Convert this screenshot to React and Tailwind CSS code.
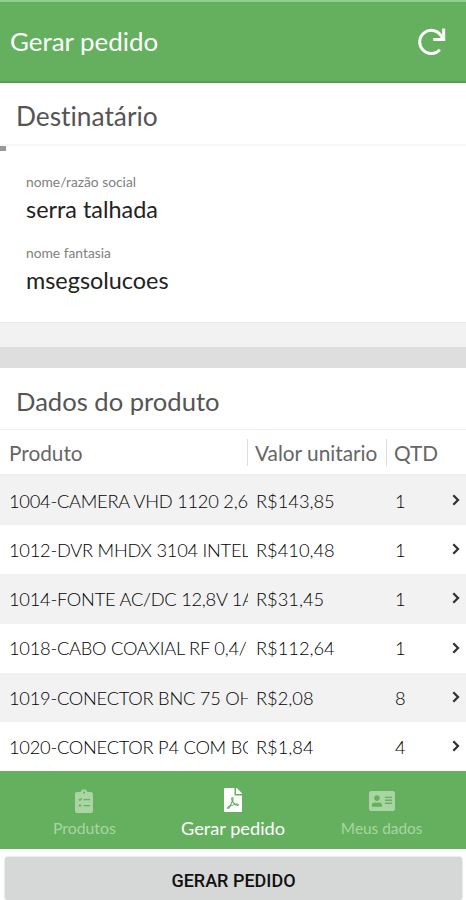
import { FaAddressCard, FaFilePdf } from "react-icons/fa";

const PRODUCTS = [
  { name: "1004-CAMERA VHD 1120 2,6", price: "R$143,85", qty: 1 },
  { name: "1012-DVR MHDX 3104 INTEL", price: "R$410,48", qty: 1 },
  { name: "1014-FONTE AC/DC 12,8V 1A", price: "R$31,45", qty: 1 },
  { name: "1018-CABO COAXIAL RF 0,4/", price: "R$112,64", qty: 1 },
  { name: "1019-CONECTOR BNC 75 OH", price: "R$2,08", qty: 8 },
  { name: "1020-CONECTOR P4 COM BO", price: "R$1,84", qty: 4 },
];

function RefreshIcon() {
  return (
    <svg width="28" height="28" viewBox="0 0 28 28" fill="none" stroke="white" strokeWidth="3">
      <path d="M21.8 21.8A11.6 11.6 0 1 1 22.9 7.4L25.2 10.8" />
      <path d="M25.7 0.5v11H15.2" />
    </svg>
  );
}

function ClipboardIcon() {
  return (
    <svg width="18" height="24" viewBox="0 0 18 24">
      <path
        fill="currentColor"
        d="M2 3h3.6a3.5 3.5 0 0 1 6.8 0H16a2 2 0 0 1 2 2v17a2 2 0 0 1-2 2H2a2 2 0 0 1-2-2V5a2 2 0 0 1 2-2z"
      />
      <circle cx="9" cy="3.4" r="1" fill="#65b05f" />
      <path
        d="M3.8 10.3l1.1 1 2-2.2M8.6 10.6H15M8.6 16.6H15"
        stroke="#65b05f"
        strokeWidth="1.3"
        fill="none"
      />
      <circle cx="5" cy="16.6" r="1.2" fill="#65b05f" />
    </svg>
  );
}

function Chevron() {
  return (
    <svg className="-mt-[3px]" width="8" height="12" viewBox="0 0 8 12" fill="none" stroke="#333" strokeWidth="2.3">
      <path d="M1.3 1.2L6 6l-4.7 4.8" />
    </svg>
  );
}

function Field({ label, value }) {
  return (
    <div className="h-[71px]">
      <p className="text-[13.8px] leading-[18px] text-[#808080]">{label}</p>
      <p className="mt-[5px] text-[23.4px] leading-[26px] text-[#222]">{value}</p>
    </div>
  );
}

function ProductRow({ name, price, qty }) {
  return (
    <div className="flex flex-1 items-center pl-[9px] pr-[6px] pt-[2px] text-[18.3px] font-light text-black odd:bg-[#f2f2f2]">
      <span className="w-[239px] overflow-hidden whitespace-nowrap tracking-[-0.25px]">{name}</span>
      <span className="ml-2 w-[139px]">{price}</span>
      <span className="flex-1">{qty}</span>
      <Chevron />
    </div>
  );
}

export default function App() {
  return (
    <div className="flex h-[900px] w-full flex-col overflow-hidden bg-white font-['Lato',sans-serif] [font-variant-ligatures:none]">
      <header className="flex h-[83px] shrink-0 items-center justify-between border-t-2 border-b-2 border-t-[#8fd18a] border-b-[#559f4f] bg-[#65b05f] pl-[10px] pr-[20px] text-white">
        <h1 className="text-[25.9px]">Gerar pedido</h1>
        <RefreshIcon />
      </header>

      <section className="h-[239px] shrink-0">
        <h2 className="h-[63px] border-b-2 border-[#f8f8f8] pl-4 text-[26.3px] leading-[66px] text-[#555]">
          Destinatário
        </h2>
        <div className="h-[5px] w-[6px] bg-[#999]" />
        <div className="pl-[26px] pt-[22px]">
          <Field label="nome/razão social" value="serra talhada" />
          <Field label="nome fantasia" value="msegsolucoes" />
        </div>
      </section>

      <div className="h-[25px] shrink-0 border-t border-[#e8e8e8] bg-[#f2f2f2]" />
      <div className="h-[21px] shrink-0 bg-[#dedede]" />

      <section className="flex h-[403px] shrink-0 flex-col">
        <h2 className="h-[62px] shrink-0 border-b border-[#eee] pl-4 text-[25.6px] leading-[66px] text-[#555]">
          Dados do produto
        </h2>
        <div className="flex h-[46px] shrink-0 items-center border-b-2 border-[#eee] pl-[9px] text-[20.8px] leading-[27px] text-[#666]">
          <span className="w-[238px]">Produto</span>
          <span className="w-[139px] whitespace-nowrap border-l border-[#ddd] pl-[7px]">Valor unitario</span>
          <span className="border-l border-[#ddd] pl-[7px]">QTD</span>
        </div>
        <div className="flex flex-1 flex-col">
          {PRODUCTS.map((p) => (
            <ProductRow key={p.name} {...p} />
          ))}
        </div>
      </section>

      <nav className="flex h-[78px] shrink-0 bg-[#65b05f] pl-[10px] pr-[10px] text-[#a8d5a2]">
        <div className="flex flex-1 flex-col items-center pt-[18px]">
          <ClipboardIcon />
          <span className="mt-[4px] text-[15.8px] leading-[22px]">Produtos</span>
        </div>
        <div className="flex flex-1 flex-col items-center pt-[17px] text-white">
          <FaFilePdf size={24} />
          <span className="mt-[5px] text-[18.2px] leading-[22px]">Gerar pedido</span>
        </div>
        <div className="flex flex-1 flex-col items-center pt-[17px]">
          <FaAddressCard size={26} />
          <span className="mt-[3px] text-[15.4px] leading-[22px]">Meus dados</span>
        </div>
      </nav>

      <div className="flex flex-1 pl-[5px] pr-[4px] pt-[8px]">
        <button className="flex-1 rounded-[3px] bg-[#d6d8d7] pt-[4px] font-['Roboto',sans-serif] text-[18px] font-medium text-[#111] shadow-[0_0_2px_#bbb]">
          GERAR PEDIDO
        </button>
      </div>
    </div>
  );
}
